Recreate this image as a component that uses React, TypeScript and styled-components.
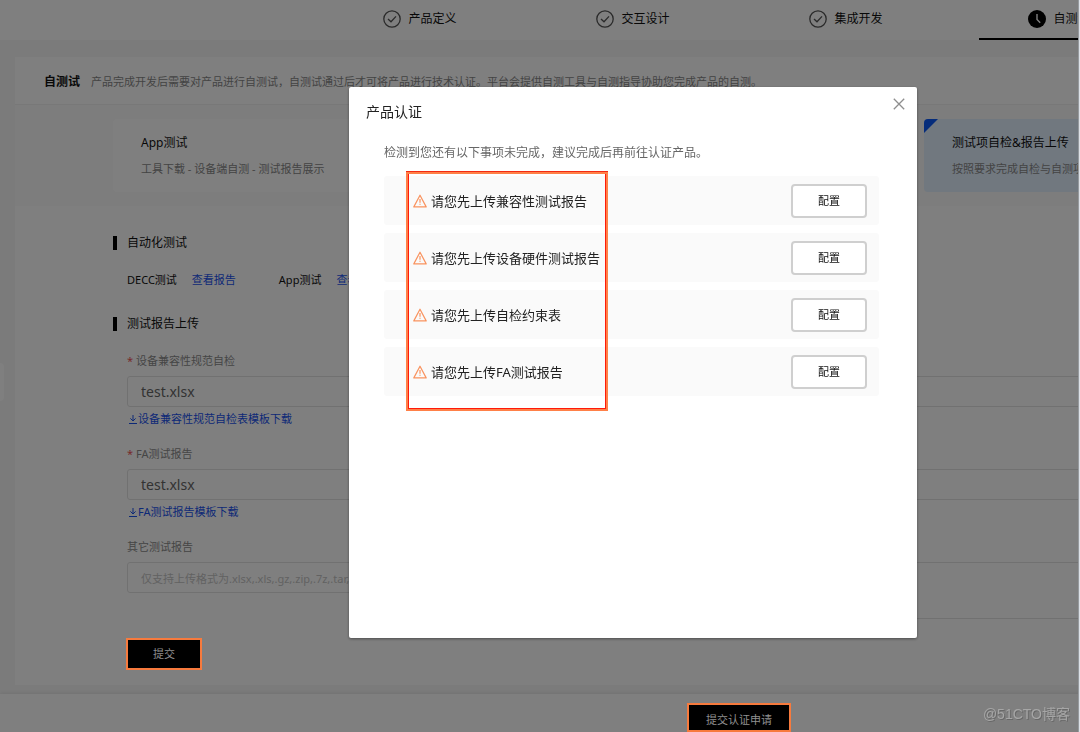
import React from 'react';
import styled, { createGlobalStyle } from 'styled-components';

const GlobalStyle = createGlobalStyle`
  *, *::before, *::after { box-sizing: border-box; }
  body {
    margin: 0;
    overflow: hidden;
    background: #f6f6f6;
    color: #111;
    font-family: "Noto Sans", "Noto Sans CJK SC", sans-serif;
    font-size: 12px;
    line-height: 20px;
  }
  button, input, textarea { font: inherit; margin: 0; }
  h1, h2, h3, p, ul, ol { margin: 0; padding: 0; font-weight: 400; font-size: inherit; }
  ul, ol { list-style: none; }
`;

const Page = styled.div`
  overflow: hidden;
  white-space: nowrap;
`;

const Steps = styled.ol`
  display: flex;
  gap: 53px;
  height: 40px;
  padding-left: 340px;
  background: #fff;
`;

const Step = styled.li<{ $active?: boolean }>`
  flex: 0 0 160px;
  display: flex;
  align-items: center;
  justify-content: center;
  gap: 7px;
  font-size: 12px;
  border-bottom: 2px solid ${(p) => (p.$active ? '#000' : 'transparent')};
`;

const Card = styled.main`
  margin: 17px 0 9px 15px;
  background: #fff;
`;

const CardHeader = styled.header`
  display: flex;
  align-items: center;
  gap: 11px;
  height: 48px;
  padding: 2px 0 0 29px;
  border-bottom: 1px solid #f0f0f0;
`;

const CardTitle = styled.h1`
  && { font-size: 12px; font-weight: 700; }
`;

const Intro = styled.p`
  && { font-size: 11px; }
  color: #888;
`;

const Tabs = styled.div`
  display: flex;
  gap: 16px;
  padding: 14px 0 14px 98px;
  background: #fafafa;
`;

const Tab = styled.button<{ $selected?: boolean; $width: number }>`
  position: relative;
  flex: 0 0 ${(p) => p.$width}px;
  display: flex;
  flex-direction: column;
  gap: 6px;
  height: 73px;
  padding: 14px 28px;
  overflow: hidden;
  border: 0;
  border-radius: 4px;
  background: ${(p) => (p.$selected ? '#e2f0ff' : '#fff')};
  color: #111;
  text-align: left;

  &::before {
    content: '';
    display: ${(p) => (p.$selected ? 'block' : 'none')};
    position: absolute;
    top: 0;
    left: 0;
    border-top: 14px solid #0a59f7;
    border-right: 14px solid transparent;
  }
`;

const TabNote = styled.span`
  font-size: 11px;
  color: #888;
`;

const Body = styled.div`
  padding: 27px 0 15px 98px;
`;

const SectionTitle = styled.h2`
  display: flex;
  align-items: center;
  gap: 10px;
  && { font-size: 12px; }

  &::before {
    content: '';
    width: 4px;
    height: 14px;
    background: #000;
  }
`;

const Results = styled.ul`
  display: flex;
  gap: 43px;
  padding: 17px 0 24px 14px;
  font-size: 11px;
`;

const Result = styled.li`
  display: flex;
  gap: 15px;
`;

const Link = styled.a`
  color: #1a52ee;
  font-size: 11px;
  text-decoration: none;
`;

const Form = styled.form`
  padding: 17px 0 0 14px;
`;

const Columns = styled.div`
  display: grid;
  grid-template-columns: 1fr 1fr;
  gap: 40px;
  margin-right: -120px;
`;

const Fields = styled.div`
  display: flex;
  flex-direction: column;
  gap: 15px;
`;

const Field = styled.div`
  display: flex;
  flex-direction: column;
  height: 78px;
`;

const Label = styled.label`
  flex: none;
  height: 20px;
  margin-bottom: 5px;
  font-size: 11px;
  color: #8c8c8c;
`;

const Required = styled.span`
  margin-right: 3px;
  color: #e55;
`;

const TextBox = styled.input`
  height: 31px;
  flex: none;
  width: 100%;
  padding: 0 13px;
  border: 1px solid #e2e2e2;
  border-radius: 3px;
  background: transparent;
  color: #666;
  font-size: 14px;

  &::placeholder { color: #c4c4c4; font-size: 11px; opacity: 1; }
`;

const TextArea = styled.textarea`
  height: 57px;
  flex: none;
  width: 100%;
  border: 1px solid #e2e2e2;
  border-radius: 3px;
  background: transparent;
  resize: none;
`;

const Download = styled(Link)`
  display: flex;
  align-items: center;
  gap: 1px;
  margin: 2px 0 0 2px;
`;

const DarkButton = styled.button<{ $width: number; $height: number }>`
  position: relative;
  z-index: 2;
  width: ${(p) => p.$width}px;
  height: ${(p) => p.$height}px;
  padding: 0;
  border: 2px solid #f77a3d;
  background: #000;
  color: #909090;
  font-size: 11px;
`;

const ApplyButton = styled(DarkButton)`
  padding-top: 5px;
`;

const SubmitRow = styled.div`
  padding-top: 23px;
  margin-left: -1px;
`;

const Footer = styled.footer`
  display: flex;
  justify-content: center;
  height: 60px;
  padding: 9px 0 0 398px;
  background: #fff;
  box-shadow: 0 -1px 4px rgba(0, 0, 0, 0.08);
`;

const Handle = styled.div`
  position: absolute;
  left: 0;
  top: 363px;
  width: 4px;
  height: 38px;
  border-radius: 0 4px 4px 0;
  background: #fff;
`;

const Overlay = styled.div`
  position: fixed;
  inset: 0;
  z-index: 1;
  display: flex;
  align-items: flex-start;
  justify-content: center;
  padding: 87px 0 0 186px;
  background: rgba(0, 0, 0, 0.5);
`;

const Dialog = styled.section`
  width: 568px;
  min-height: 551px;
  padding: 7px 8px 20px 17px;
  border-radius: 2px;
  background: #fff;
  box-shadow: 0 1px 3px rgba(0, 0, 0, 0.4);
`;

const DialogHeader = styled.header`
  display: flex;
  align-items: flex-start;
  justify-content: space-between;
`;

const DialogTitle = styled.h2`
  && { font-size: 14px; }
  padding-top: 8px;
  color: #222;
`;

const Close = styled.button`
  display: flex;
  padding: 4px;
  border: 0;
  background: none;
`;

const DialogText = styled.p`
  && { font-size: 12px; }
  padding: 21px 18px 13px;
  color: #666;
`;

const Todos = styled.ul`
  position: relative;
  display: flex;
  flex-direction: column;
  gap: 8px;
  margin: 0 30px 0 18px;
`;

const Todo = styled.li`
  display: flex;
  align-items: center;
  gap: 4px;
  height: 49px;
  padding: 0 12px 0 29px;
  border-radius: 3px;
  background: #fafafa;
  color: #222;
  font-size: 13px;
`;

const ConfigButton = styled.button`
  width: 76px;
  height: 34px;
  margin-left: auto;
  border: 2px solid #cfcfcf;
  border-radius: 4px;
  background: #fff;
  color: #111;
  font-size: 11px;
`;

const Highlight = styled.li`
  position: absolute;
  left: 22px;
  top: -4px;
  width: 202px;
  height: 239px;
  border: 2px solid #ff8048;
  box-shadow: 0 -1px #f32a12, inset 1px 0 #ff1a0a, inset -1px -1px #ff1a0a;
  pointer-events: none;
`;

const Watermark = styled.div`
  position: fixed;
  right: 10px;
  bottom: 8px;
  z-index: 3;
  color: #a6a6a6;
  font-family: "Liberation Sans", "Noto Sans CJK SC", sans-serif;
  font-size: 14px;
  text-shadow: 1px 1px #686868;
`;

const WindowEdge = styled.div`
  position: fixed;
  top: 0;
  right: 0;
  bottom: 0;
  z-index: 4;
  width: 2px;
  border-left: 1px solid #969a9e;
  background: #dce0e6;
`;

const DoneIcon = () => (
  <svg width="18" height="18" viewBox="0 0 18 18" fill="none" stroke="#555" strokeWidth="1.3">
    <circle cx="9" cy="9" r="8.2" />
    <path d="M5 9l3 2.8L13 6.4" />
  </svg>
);

const ClockIcon = () => (
  <svg width="18" height="18" viewBox="0 0 18 18">
    <circle cx="9" cy="9" r="9" fill="#000" />
    <path d="M9 4v5.4l3.2 3.4" fill="none" stroke="#fff" strokeWidth="1.4" />
  </svg>
);

const WarnIcon = () => (
  <svg width="14" height="14" viewBox="0 0 14 14" fill="none" stroke="#f9935f" strokeWidth="1.2" strokeLinejoin="round">
    <path d="M7 1.2L13.2 12.9H.8z" />
    <path d="M7 5v3.8M7 9.8v1" />
  </svg>
);

const DownloadIcon = () => (
  <svg width="8" height="9" viewBox="0 0 8 9" fill="none" stroke="#1a52ee" strokeWidth="1">
    <path d="M4 0v6M1.4 3.4L4 6l2.6-2.6M0 8.5h8" />
  </svg>
);

const CloseIcon = () => (
  <svg width="12" height="12" viewBox="0 0 12 12" stroke="#8e8e8e" strokeWidth="1.3">
    <path d="M.8.8l10.4 10.4M11.2.8L.8 11.2" />
  </svg>
);

const doneSteps = ['产品定义', '交互设计', '集成开发'];

const todos = [
  '请您先上传兼容性测试报告',
  '请您先上传设备硬件测试报告',
  '请您先上传自检约束表',
  '请您先上传FA测试报告',
];

export default function App() {
  return (
    <>
      <GlobalStyle />
      <Page>
        <Steps>
          {doneSteps.map((name) => (
            <Step key={name}>
              <DoneIcon />
              {name}
            </Step>
          ))}
          <Step $active>
            <ClockIcon />
            自测试
          </Step>
        </Steps>
        <Card>
          <CardHeader>
            <CardTitle>自测试</CardTitle>
            <Intro>
              产品完成开发后需要对产品进行自测试，自测试通过后才可将产品进行技术认证。平台会提供自测工具与自测指导协助您完成产品的自测。
            </Intro>
          </CardHeader>
          <Tabs>
            <Tab type="button" $width={795}>
              App测试
              <TabNote>工具下载 - 设备端自测 - 测试报告展示</TabNote>
            </Tab>
            <Tab type="button" $width={379} $selected>
              测试项自检&amp;报告上传
              <TabNote>按照要求完成自检与自测项</TabNote>
            </Tab>
          </Tabs>
          <Body>
            <SectionTitle>自动化测试</SectionTitle>
            <Results>
              <Result>
                DECC测试 <Link href="#decc">查看报告</Link>
              </Result>
              <Result>
                App测试 <Link href="#app">查看报告</Link>
              </Result>
            </Results>
            <SectionTitle>测试报告上传</SectionTitle>
            <Form>
              <Columns>
                <Fields>
                  <Field>
                    <Label htmlFor="compat">
                      <Required>*</Required>设备兼容性规范自检
                    </Label>
                    <TextBox id="compat" defaultValue="test.xlsx" />
                    <Download href="#compat-template">
                      <DownloadIcon />
                      设备兼容性规范自检表模板下载
                    </Download>
                  </Field>
                  <Field>
                    <Label htmlFor="fa">
                      <Required>*</Required>FA测试报告
                    </Label>
                    <TextBox id="fa" defaultValue="test.xlsx" />
                    <Download href="#fa-template">
                      <DownloadIcon />
                      FA测试报告模板下载
                    </Download>
                  </Field>
                  <Field>
                    <Label htmlFor="other">其它测试报告</Label>
                    <TextBox id="other" placeholder="仅支持上传格式为.xlsx,.xls,.gz,.zip,.7z,.tar," />
                  </Field>
                </Fields>
                <Fields>
                  <Field>
                    <Label htmlFor="right-1" />
                    <TextBox id="right-1" />
                  </Field>
                  <Field>
                    <Label htmlFor="right-2" />
                    <TextBox id="right-2" />
                  </Field>
                  <Field>
                    <Label htmlFor="right-3" />
                    <TextArea id="right-3" />
                  </Field>
                </Fields>
              </Columns>
              <SubmitRow>
                <DarkButton type="button" $width={76} $height={32}>
                  提交
                </DarkButton>
              </SubmitRow>
            </Form>
          </Body>
        </Card>
        <Footer>
          <ApplyButton type="button" $width={104} $height={29}>
            提交认证申请
          </ApplyButton>
        </Footer>
        <Handle />
      </Page>
      <Overlay>
        <Dialog role="dialog" aria-labelledby="dialog-title">
          <DialogHeader>
            <DialogTitle id="dialog-title">产品认证</DialogTitle>
            <Close type="button" aria-label="关闭">
              <CloseIcon />
            </Close>
          </DialogHeader>
          <DialogText>检测到您还有以下事项未完成，建议完成后再前往认证产品。</DialogText>
          <Todos>
            {todos.map((text) => (
              <Todo key={text}>
                <WarnIcon />
                {text}
                <ConfigButton type="button">配置</ConfigButton>
              </Todo>
            ))}
            <Highlight aria-hidden="true" />
          </Todos>
        </Dialog>
      </Overlay>
      <Watermark>@51CTO博客</Watermark>
      <WindowEdge />
    </>
  );
}
